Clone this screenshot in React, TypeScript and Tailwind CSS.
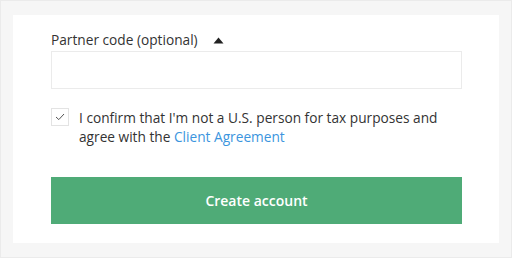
export default function App() {
  return (
    <div
      className="w-[512px] h-[258px] bg-[#f6f6f6] border border-[#ebebeb] pl-[12px] pt-[14px]"
      style={{ fontFamily: '"Open Sans", "Liberation Sans", sans-serif' }}
    >
      <div className="w-[486px] h-[228px] bg-white pt-[15px] pl-[38px] pr-[37px]">
        {/* Partner code */}
        <div className="flex items-center h-[20px] text-[13.7px] text-[#333]">
          <span>Partner code (optional)</span>
          <svg className="ml-[15px]" width="11" height="7" viewBox="0 0 11 7">
            <path d="M5.5 0.5 L10.5 6.5 L0.5 6.5 Z" fill="#222" />
          </svg>
        </div>
        <input
          type="text"
          className="mt-[1px] block w-full h-[38px] border border-[#ebebeb] outline-none"
        />

        {/* Confirm */}
        <div className="mt-[19px] flex items-start gap-[10px]">
          <div className="w-[18px] h-[18px] shrink-0 border border-[#e3e3e3] flex items-center justify-center">
            <svg width="10" height="8" viewBox="0 0 10 8">
              <path d="M1 4 L3.8 6.6 L9 1" fill="none" stroke="#555" strokeWidth="1" />
            </svg>
          </div>
          <p className="text-[13.7px] leading-[19px] text-[#333]">
            I confirm that I'm not a U.S. person for tax purposes and agree with the{" "}
            <a className="text-[#3b95de]">Client Agreement</a>
          </p>
        </div>

        {/* Submit */}
        <button className="mt-[31px] w-full h-[47px] bg-[#4fab77] text-white text-[14px] font-semibold">
          Create account
        </button>
      </div>
    </div>
  );
}
